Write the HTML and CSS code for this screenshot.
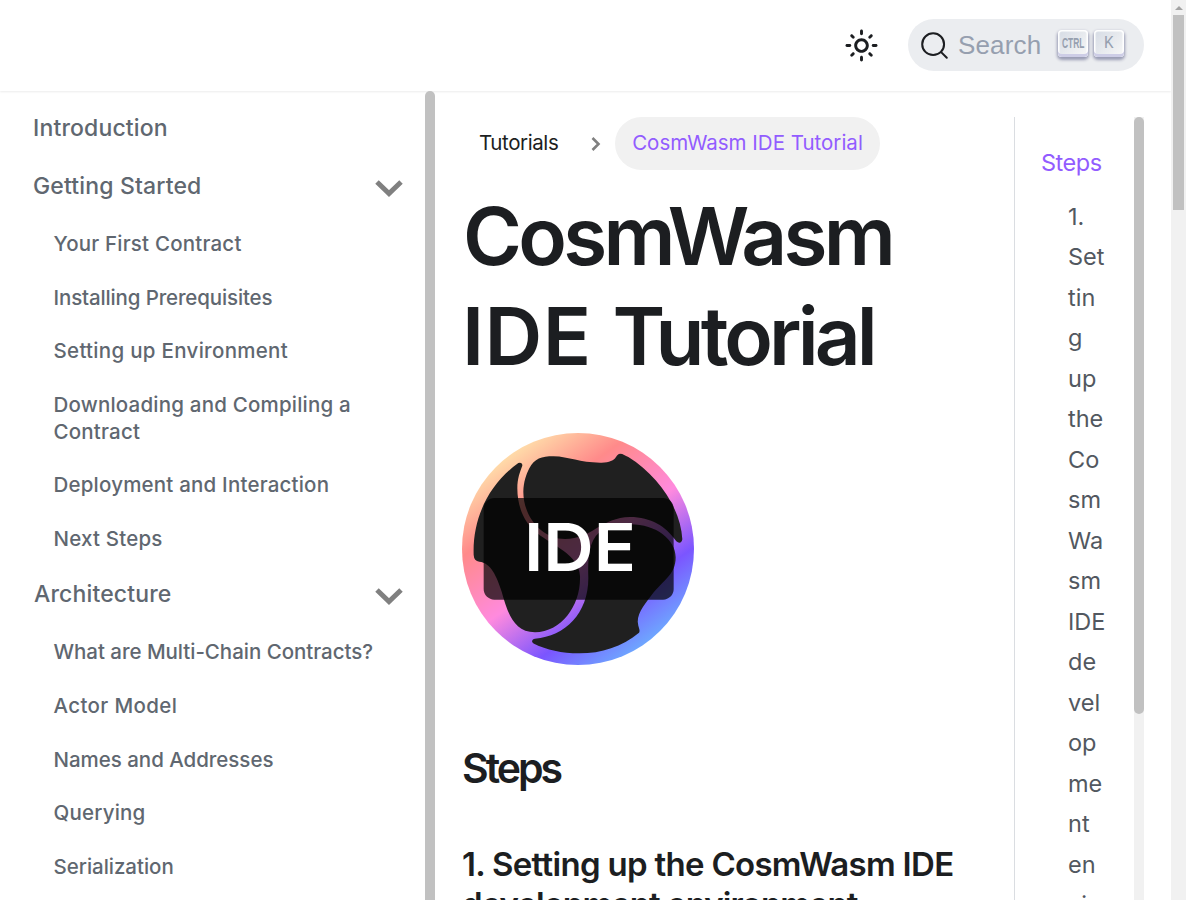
FILE: index.html
```html
<!DOCTYPE html>
<html lang="en">
<head>
<meta charset="utf-8">
<title>CosmWasm IDE Tutorial</title>
<link rel="stylesheet" href="styles.css">
</head>
<body>
<div class="window">
  <div class="page">
    <header class="navbar">
      <svg class="sun" viewBox="0 0 24 24" width="35" height="35"><path fill="currentColor" d="M12,9c1.65,0,3,1.35,3,3s-1.35,3-3,3s-3-1.35-3-3S10.35,9,12,9 M12,7c-2.76,0-5,2.24-5,5s2.24,5,5,5s5-2.24,5-5 S14.76,7,12,7L12,7z M2,13l2,0c0.55,0,1-0.45,1-1s-0.45-1-1-1l-2,0c-0.55,0-1,0.45-1,1S1.45,13,2,13z M20,13l2,0c0.55,0,1-0.45,1-1 s-0.45-1-1-1l-2,0c-0.55,0-1,0.45-1,1S19.45,13,20,13z M11,2v2c0,0.55,0.45,1,1,1s1-0.45,1-1V2c0-0.55-0.45-1-1-1S11,1.45,11,2z M11,20v2c0,0.55,0.45,1,1,1s1-0.45,1-1v-2c0-0.55-0.45-1-1-1C11.45,19,11,19.45,11,20z M5.99,4.58c-0.39-0.39-1.03-0.39-1.41,0 c-0.39,0.39-0.39,1.03,0,1.41l1.06,1.06c0.39,0.39,1.03,0.39,1.41,0s0.39-1.03,0-1.41L5.99,4.58z M18.36,16.95 c-0.39-0.39-1.03-0.39-1.41,0c-0.39,0.39-0.39,1.03,0,1.41l1.06,1.06c0.39,0.39,1.03,0.39,1.41,0c0.39-0.39,0.39-1.03,0-1.41 L18.36,16.95z M19.42,5.99c0.39-0.39,0.39-1.03,0-1.41c-0.39-0.39-1.03-0.39-1.41,0l-1.06,1.06c-0.39,0.39-0.39,1.03,0,1.41 s1.03,0.39,1.41,0L19.42,5.99z M7.05,18.36c0.39-0.39,0.39-1.03,0-1.41c-0.39-0.39-1.03-0.39-1.41,0l-1.06,1.06 c-0.39,0.39-0.39,1.03,0,1.41s1.03,0.39,1.41,0L7.05,18.36z"/></svg>
      <div class="search">
        <svg class="search-icon" viewBox="0 0 20 20" width="29" height="29"><path d="M14.386 14.386l4.0877 4.0877-4.0877-4.0877c-2.9418 2.9419-7.7115 2.9419-10.6533 0-2.9419-2.9418-2.9419-7.7115 0-10.6533 2.9418-2.9419 7.7115-2.9419 10.6533 0 2.9419 2.9418 2.9419 7.7115 0 10.6533z" stroke="currentColor" stroke-width="1.4" fill="none" stroke-linecap="round" stroke-linejoin="round"/></svg>
        <span class="search-label">Search</span>
        <span class="key"><svg width="30" height="27" viewBox="0 0 30 27"><text class="ctrl" x="4" y="18" textLength="22.5" lengthAdjust="spacingAndGlyphs">CTRL</text></svg></span>
        <span class="key"><svg width="30" height="27" viewBox="0 0 30 27"><text class="kk" x="10" y="17.5" textLength="9.5" lengthAdjust="spacingAndGlyphs">K</text></svg></span>
      </div>
    </header>
    <div class="body">
      <nav class="sidebar">
        <div class="menu">
          <a class="top intro">Introduction</a>
          <a class="top gs"><span>Getting Started</span><svg width="28" height="18" viewBox="0 0 28 18"><path d="M2 2 14 13.5 26 2"/></svg></a>
          <div class="sub">
            <a class="s1">Your First Contract</a>
            <a class="s2">Installing Prerequisites</a>
            <a class="s3">Setting up Environment</a>
            <a class="s4">Downloading and Compiling a<br>Contract</a>
            <a class="s5">Deployment and Interaction</a>
            <a class="s6">Next Steps</a>
          </div>
          <a class="top ar"><span>Architecture</span><svg width="28" height="18" viewBox="0 0 28 18"><path d="M2 2 14 13.5 26 2"/></svg></a>
          <div class="sub">
            <a class="s7">What are Multi-Chain Contracts?</a>
            <a class="s8">Actor Model</a>
            <a class="s9">Names and Addresses</a>
            <a class="s10">Querying</a>
            <a class="s11">Serialization</a>
          </div>
        </div>
        <div class="side-bar"></div>
      </nav>
      <main class="content">
        <div class="crumbs">
          <a class="crumb">Tutorials</a>
          <svg class="sep" width="10" height="14" viewBox="0 0 10 14"><path d="M1.5 1 7.5 7 1.5 13"/></svg>
          <a class="pill">CosmWasm IDE Tutorial</a>
        </div>
        <h1><span class="t1">CosmWasm</span><br><span class="t2">IDE</span> <span class="t3">Tutorial</span></h1>
        <svg class="logo" viewBox="36 39 696 696" width="232" height="232">
          <defs><linearGradient id="ring" gradientUnits="userSpaceOnUse" x1="180" y1="110" x2="585" y2="671">
            <stop offset="0" stop-color="#ffd9a8"/><stop offset=".23" stop-color="#ff8a8a"/><stop offset=".525" stop-color="#ff8ade"/><stop offset=".785" stop-color="#7b55ff"/><stop offset="1" stop-color="#6ea6ff"/>
          </linearGradient></defs>
          <circle cx="384" cy="387" r="348" fill="url(#ring)"/>
          <g fill="#202020">
            <path d="M205 129C120 190 67 290 71 405Q72 423 88 425C122 428 140 468 155 515C172 575 190 637 255 637C335 635 393 555 390 468C388 405 305 375 262 340C222 308 202 260 202 205C202 175 210 155 217 137Q217 126 205 129Z"/>
            <path d="M238 145C253 116 275 109 310 109C360 110 390 129 455 128C505 126 495 102 510 101C520 101 525 107 535 111C625 167 692 265 697 358C695 372 684 371 676 360C648 320 603 291 540 291C455 292 425 357 345 357C275 357 220 290 220 215C221 185 228 165 238 145Z"/>
            <path d="M540 313C620 313 677 360 677 412C677 465 640 480 605 525C580 558 557 585 565 617C569 630 570 633 567 638C515 680 455 700 388 700C335 700 290 689 252 671C243 666 245 658 255 656C345 650 415 580 415 475C414 430 414 390 430 360C448 327 485 313 540 313Z"/>
          </g>
          <rect x="101" y="234" width="570" height="305" rx="32" fill="#000" fill-opacity=".7"/>
          <text class="ide" x="222" y="452" textLength="336" lengthAdjust="spacingAndGlyphs">IDE</text>
        </svg>
        <h2>Steps</h2>
        <h3><span class="h3a">1. Setting up the CosmWasm IDE</span><br><span class="h3b">development environment</span></h3>
      </main>
      <aside class="toc">
        <div class="toc-list">
          <a class="active">Steps</a>
          <a class="entry">1.<br>Set<br>tin<br>g<br>up<br>the<br>Co<br>sm<br>Wa<br>sm<br>IDE<br>de<br>vel<br>op<br>me<br>nt<br>en<br>vi</a>
        </div>
        <div class="toc-track"><div class="toc-thumb"></div></div>
      </aside>
    </div>
  </div>
  <div class="scrollbar"><div class="arrow"></div><div class="thumb"></div></div>
</div>
</body>
</html>
```
FILE: styles.css
```css
* { box-sizing: border-box; }
body { margin: 0; font-family: Inter, "Open Sans", sans-serif; color: #1c1e21; background: #fff; overflow: hidden; }
.window { display: flex; height: 900px; overflow: hidden; }
.page { width: 1171px; height: 900px; display: flex; flex-direction: column; }
.navbar { height: 91px; flex: none; display: flex; align-items: center; justify-content: flex-end; padding: 0 27px 1px 0; box-shadow: 0 1px 2px rgba(0,0,0,.08); }
.sun { margin-right: 29px; color: #1c1e21; }
.search { width: 236px; height: 52px; border-radius: 26px; background: #ebedf0; display: flex; align-items: center; padding-left: 12px; }
.search-icon { margin-right: 9px; color: #1c1e21; }
.search-label { font: 26px/30px "Liberation Sans", sans-serif; color: #969faf; width: 100px; flex: none; letter-spacing: .15px; }
.key { width: 30px; height: 27px; flex: none; margin: -3px 6px 0 0; border-radius: 4px; background: linear-gradient(-225deg, #d5dbe4, #f8f8f8); box-shadow: inset 0 -3px 0 #cdcde6, inset 0 0 1px 1.5px #fff, 0 2px 3px 1px rgba(30,35,90,.4); }
.key svg { display: block; }
.ctrl { font: 700 15px "Liberation Sans", sans-serif; fill: #969faf; }
.kk { font: 17px Roboto, sans-serif; fill: #969faf; }
.body { flex: 1; min-height: 0; display: flex; overflow: hidden; }
.sidebar { width: 435px; flex: none; display: flex; }
.menu { width: 425px; padding: 8px 22px 0 33px; display: flex; flex-direction: column; color: #606770; font-weight: 500; }
.top { height: 58px; display: flex; flex: none; align-items: center; justify-content: space-between; font-size: 23px; letter-spacing: .15px; }
.ar span { padding-left: 1px; }
.top svg { margin-top: 5px; }
.top path { fill: none; stroke: #808080; stroke-width: 5; }
.sub { padding: 1.8px 0 0 20.5px; font-size: 20.5px; line-height: 27px; letter-spacing: .2px; }
.sub a { display: block; padding: 13.3px 0; white-space: nowrap; }
.sub .s2 { letter-spacing: -.14px; }
.sub .s3 { letter-spacing: .3px; }
.sub .s7, .sub .s9, .sub .s11 { letter-spacing: -.03px; }
.sub .s8 { letter-spacing: .36px; }
.side-bar { width: 10px; background: #c1c1c1; border-radius: 5px 5px 0 0; z-index: 1; }
.content { width: 579px; flex: none; padding: 26px 0 0 27px; }
.crumbs { display: flex; align-items: center; height: 53px; font-size: 20.5px; }
.crumb { width: 129px; padding: 0 0 2px 17px; color: #1c1e21; letter-spacing: -.4px; }
.sep path { fill: none; stroke: #808080; stroke-width: 2.6; }
.pill { margin-left: 14px; width: 265px; height: 53px; line-height: 52px; text-align: center; border-radius: 27px; background: #f1f1f1; color: #925cff; white-space: nowrap; }
h1 { margin: 16px 0 0; font-size: 80px; font-weight: 600; line-height: 100px; letter-spacing: -3.7px; white-space: nowrap; }
.t1 { padding-left: 1px; }
.t2 { letter-spacing: .4px; }
.t3 { padding-left: 4.5px; letter-spacing: -3.9px; }
.logo { display: block; margin-top: 47px; }
.ide { font: 600 198px Inter, sans-serif; fill: #fff; }
h2 { margin: 77px 0 0; font-size: 41px; font-weight: 600; line-height: 52px; letter-spacing: -3px; }
h3 { margin: 50px 0 0; font-size: 33px; font-weight: 600; line-height: 40px; letter-spacing: -.7px; white-space: nowrap; }
.h3b { letter-spacing: -.95px; }
.toc { width: 130px; margin-top: 26px; border-left: 1px solid #dadde1; display: flex; justify-content: space-between; }
.toc-list { padding: 26px 0 0 26px; font-size: 23.5px; line-height: 40.5px; color: #525860; }
.toc-list a { display: block; }
.toc-list .active { color: #925cff; letter-spacing: -.5px; }
.entry { padding: 13px 0 0 27px; }
.toc-track { width: 10px; background: #f1f1f1; }
.toc-thumb { height: 597px; border-radius: 5px; background: #c1c1c1; }
.scrollbar { width: 15px; background: #f1f1f1; padding: 6px 2px 0; }
.arrow { width: 0; height: 0; margin: 0 auto; border: 4px solid transparent; border-top: 0; border-bottom-color: #a3a3a3; }
.thumb { height: 195px; width: 11px; margin-top: 5px; background: #c1c1c1; }
```
